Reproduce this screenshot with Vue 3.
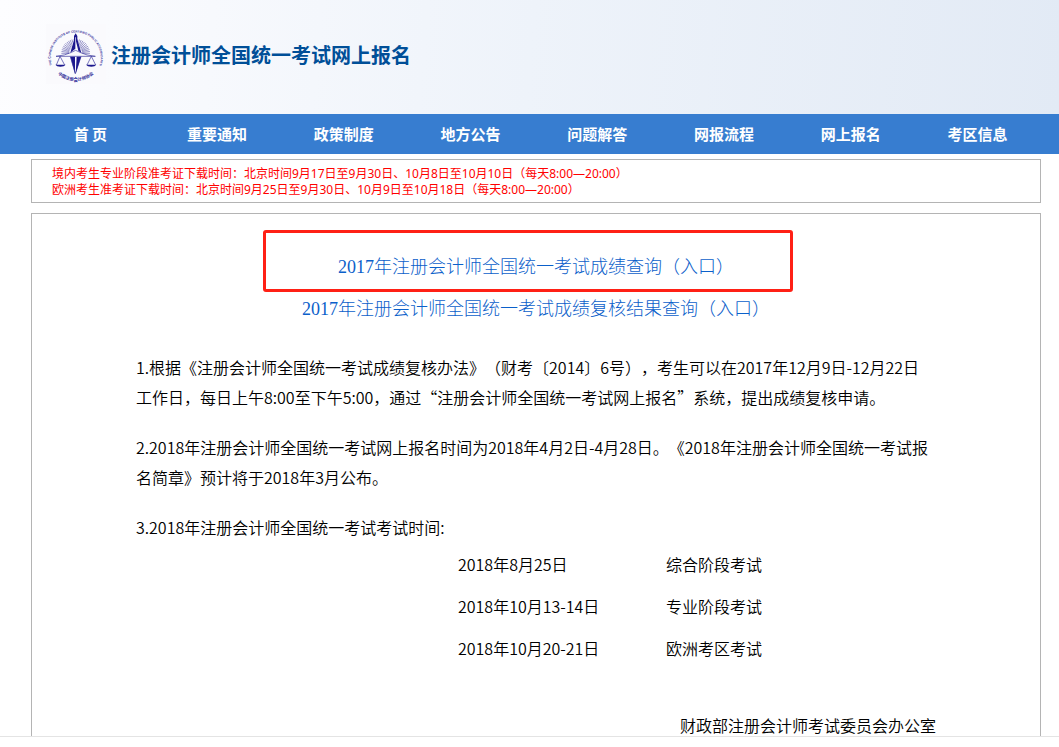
<script setup>
const navItems = [
  "首 页",
  "重要通知",
  "政策制度",
  "地方公告",
  "问题解答",
  "网报流程",
  "网上报名",
  "考区信息",
];

const notices = [
  "境内考生专业阶段准考证下载时间：北京时间9月17日至9月30日、10月8日至10月10日（每天8:00—20:00）",
  "欧洲考生准考证下载时间：北京时间9月25日至9月30日、10月9日至10月18日（每天8:00—20:00）",
];

const paragraphs = [
  "1.根据《注册会计师全国统一考试成绩复核办法》（财考〔2014〕6号），考生可以在2017年12月9日-12月22日工作日，每日上午8:00至下午5:00，通过“注册会计师全国统一考试网上报名”系统，提出成绩复核申请。",
  "2.2018年注册会计师全国统一考试网上报名时间为2018年4月2日-4月28日。《2018年注册会计师全国统一考试报名简章》预计将于2018年3月公布。",
  "3.2018年注册会计师全国统一考试考试时间:",
];

const schedule = [
  { date: "2018年8月25日", exam: "综合阶段考试" },
  { date: "2018年10月13-14日", exam: "专业阶段考试" },
  { date: "2018年10月20-21日", exam: "欧洲考区考试" },
];

// sunburst behind the scales
const rays = Array.from({ length: 25 }, (_, i) => {
  const angle = Math.PI + (Math.PI * i) / 24;
  return {
    x1: 89 + 20 * Math.cos(angle),
    y1: 88 + 20 * Math.sin(angle),
    x2: 89 + 43 * Math.cos(angle),
    y2: 88 + 43 * Math.sin(angle),
  };
});
</script>

<template>
  <div class="page">
    <div class="page-view">
      <header class="header">
        <svg class="logo" viewBox="0 0 180 180" aria-hidden="true">
          <rect class="logo-back" width="180" height="180" />
          <defs>
            <path id="logo-top" d="M21 132A75 75 0 1 1 157 132" />
            <path id="logo-bottom" d="M24 138A81 81 0 0 0 154 138" />
          </defs>
          <text class="logo-en">
            <textPath href="#logo-top" startOffset="50%">
              THE CHINESE INSTITUTE OF CERTIFIED PUBLIC ACCOUNTANTS
            </textPath>
          </text>
          <text class="logo-cn">
            <textPath href="#logo-bottom" startOffset="50%">
              中国注册会计师协会
            </textPath>
          </text>
          <line
            v-for="(ray, i) in rays"
            :key="i"
            class="logo-ray"
            v-bind="ray"
          />
          <path class="logo-white" d="M89 26L70 90H108Z" />
          <path class="logo-fill" d="M89 28L84 36V48L73 86L88 74V40H90V52L97 80L106 87L94 45V36Z" />
          <path class="logo-line" d="M30 97Q58 94 74 86L89 79L104 86Q120 94 148 97H30" />
          <path class="logo-fill" d="M73 98H87V149Z" />
          <path class="logo-line" d="M73 98L88 149L105 98M42 97L31 123M42 97L56 123M136 97L123 123M136 97L149 123" />
          <path class="logo-fill" d="M92 98H105L89 149Z" />
          <path class="logo-fill" d="M28 122H59Q55 128 43 128Q32 128 28 122ZM120 122H151Q147 128 136 128Q124 128 120 122Z" />
        </svg>
        <h1 class="title">注册会计师全国统一考试网上报名</h1>
      </header>

      <nav class="nav">
        <a v-for="item in navItems" :key="item" class="nav-link" href="#">{{ item }}</a>
      </nav>

      <section class="notice">
        <p v-for="notice in notices" :key="notice">{{ notice }}</p>
      </section>

      <main class="main">
        <div class="entries">
          <div class="entry entry--marked">
            <a href="#">2017年注册会计师全国统一考试成绩查询（入口）</a>
          </div>
          <div class="entry">
            <a href="#">2017年注册会计师全国统一考试成绩复核结果查询（入口）</a>
          </div>
        </div>

        <div class="article">
          <p v-for="text in paragraphs" :key="text" class="paragraph">{{ text }}</p>
          <table class="schedule">
            <tbody>
              <tr v-for="row in schedule" :key="row.date">
                <td class="schedule-date">{{ row.date }}</td>
                <td>{{ row.exam }}</td>
              </tr>
            </tbody>
          </table>
          <p class="signature">财政部注册会计师考试委员会办公室</p>
        </div>
      </main>
    </div>
  </div>
</template>

<style>
body {
  margin: 0;
  background: #fff;
}
</style>

<style scoped>
.page {
  display: flex;
  flex-direction: column;
  box-sizing: border-box;
  height: 100vh;
  padding-bottom: 10px;
  color: #000;
  font-family: "Noto Sans CJK SC", sans-serif;
  font-size: 16px;
  font-weight: 350;
  text-spacing-trim: space-all;
}

.page-view {
  flex: 1;
  min-height: 0;
  overflow: hidden;
  border-bottom: 1px solid #e4e4e4;
}

p,
h1 {
  margin: 0;
}

a {
  text-decoration: none;
}

.header {
  display: flex;
  align-items: center;
  gap: 5px;
  box-sizing: border-box;
  height: 114px;
  padding: 0 46px 6px;
  background: linear-gradient(95deg, #fdfdff, #eef3fa 50%, #e2eaf5);
}

.logo {
  width: 60px;
  height: 60px;
}

.logo-back {
  fill: #fafafd;
}

.logo-en,
.logo-cn {
  fill: #34309a;
  font-family: "Liberation Sans", sans-serif;
  font-size: 9px;
  font-weight: 700;
  text-anchor: middle;
}

.logo-cn {
  font-family: "Noto Sans CJK SC", sans-serif;
  font-size: 13px;
}

.logo-ray {
  stroke: #6764b0;
  stroke-width: 2;
}

.logo-fill {
  fill: #1c188e;
}

.logo-white {
  fill: #fafafd;
}

.logo-line {
  fill: none;
  stroke: #34309a;
  stroke-width: 2;
}

.title {
  padding-top: 2px;
  color: #004f98;
  font-size: 20px;
  font-weight: 700;
  line-height: 30px;
}

.nav {
  display: grid;
  grid-template-columns: repeat(8, 1fr);
  padding: 0 18px 0 27px;
  background: #377dd0;
}

.nav-link {
  color: #fff;
  font-size: 15px;
  font-weight: 700;
  line-height: 40px;
  text-align: center;
}

.notice {
  margin: 5px 18px 10px 31px;
  padding: 6px 20px 4px;
  border: 1px solid #b4b4b4;
  color: #f00;
  font-family: "Noto Sans", "Noto Sans CJK SC", sans-serif;
  font-size: 12px;
  font-weight: 400;
  line-height: 16px;
}

.main {
  margin: 0 18px 0 31px;
  padding: 32px 20px;
  border: 1px solid #b4b4b4;
}

.entries {
  margin-bottom: 22px;
  font-family: "Liberation Serif", "Noto Sans CJK SC", serif;
  font-size: 18px;
  font-weight: 300;
  line-height: 42px;
  text-align: center;
}

.entry {
  position: relative;
}

.entry a {
  color: #0b60ca;
}

/* red frame drawn over the first entry */
.entry--marked::after {
  position: absolute;
  top: -16px;
  left: calc(50% - 273px);
  box-sizing: border-box;
  width: 530px;
  height: 62px;
  border: 3px solid #ff2015;
  border-radius: 3px;
  content: "";
  pointer-events: none;
}

.article {
  max-width: 800px;
  margin: 0 auto;
}

.paragraph {
  margin-bottom: 20px;
  padding-right: 2px;
  line-height: 30px;
}

.paragraph:nth-of-type(3) {
  margin-bottom: 1px;
}

.schedule {
  margin-left: 322px;
  border-collapse: collapse;
  line-height: 42px;
}

.schedule td {
  padding: 0;
}

.schedule-date {
  width: 208px;
}

.signature {
  margin-top: 41px;
  line-height: 30px;
  text-align: right;
}
</style>
